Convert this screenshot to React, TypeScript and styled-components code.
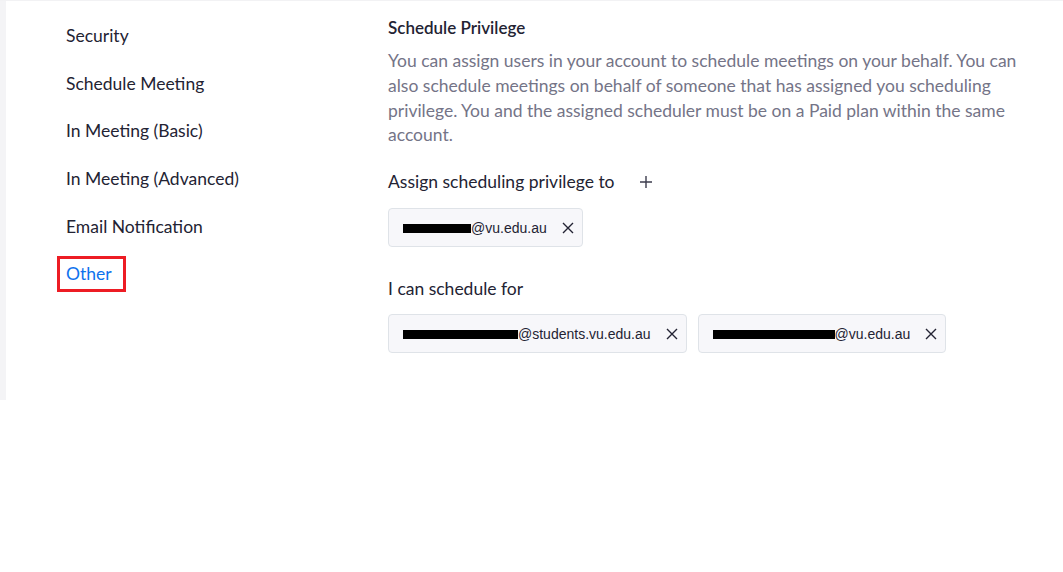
import React from "react";
import styled, { createGlobalStyle } from "styled-components";

const GlobalStyle = createGlobalStyle`
  body {
    margin: 0;
    font-family: Lato, "Open Sans", sans-serif;
    background: #ffffff;
    color: #232333;
  }
`;

const Page = styled.div`
  display: flex;
  height: 400px;
  border-top: 1px solid #f2f2f4;
  box-sizing: border-box;
`;

const Strip = styled.div`
  width: 6px;
  background: #f4f4f6;
`;

const Sidebar = styled.nav`
  width: 382px;
  padding: 11px 0 0 60px;
  box-sizing: border-box;
  display: flex;
  flex-direction: column;
  align-items: flex-start;
`;

const NavItem = styled.div<{ $active?: boolean }>`
  height: 47.6px;
  display: flex;
  align-items: center;
  font-size: 17.5px;
  color: ${(p) => (p.$active ? "#0e72ed" : "#232333")};
`;

const Highlight = styled.span`
  border: 3px solid #ed1c24;
  padding: 3px 11px 3px 6px;
  margin-left: -9px;
  line-height: 24px;
`;

const Content = styled.section`
  flex: 1;
  padding-top: 15px;
`;

const Title = styled.h3`
  margin: 0;
  font-size: 17px;
  font-weight: 600;
  line-height: 24px;
  color: #232333;
`;

const Description = styled.p`
  margin: 9px 0 0;
  max-width: 645px;
  font-size: 17.5px;
  line-height: 24.8px;
  color: #747487;
`;

const Label = styled.div<{ $gap: number }>`
  display: flex;
  align-items: center;
  margin-top: ${(p) => p.$gap}px;
  font-size: 17.5px;
  line-height: 24px;
  color: #232333;
`;

const AddButton = styled.span`
  display: inline-flex;
  margin-left: 25px;
  color: #3d3d4e;
`;

const ChipRow = styled.div<{ $gap: number }>`
  display: flex;
  gap: 11px;
  margin-top: ${(p) => p.$gap}px;
`;

const Chip = styled.div`
  display: flex;
  align-items: center;
  height: 39px;
  box-sizing: border-box;
  padding: 0 8px 0 14px;
  border: 1px solid #dfe3e8;
  border-radius: 4px;
  background: #f7f7fa;
  font-family: "Liberation Sans", Arial, sans-serif;
  font-size: 14px;
  color: #232333;
`;

const Redacted = styled.span<{ $w: number }>`
  display: inline-block;
  width: ${(p) => p.$w}px;
  height: 9px;
  background: #000;
  margin-top: 1px;
`;

const Close = styled.span`
  display: inline-flex;
  margin-left: 15px;
  color: #232333;
`;

const CloseIcon = () => (
  <svg width="12" height="12" viewBox="0 0 12 12" fill="none" stroke="currentColor" strokeWidth="1.4">
    <path d="M1 1l10 10M11 1L1 11" />
  </svg>
);

const PlusIcon = () => (
  <svg width="12" height="12" viewBox="0 0 12 12" fill="none" stroke="currentColor" strokeWidth="1.4">
    <path d="M6 0v12M0 6h12" />
  </svg>
);

const navItems = [
  "Security",
  "Schedule Meeting",
  "In Meeting (Basic)",
  "In Meeting (Advanced)",
  "Email Notification",
];

const EmailChip: React.FC<{ hidden: number; domain: string }> = ({ hidden, domain }) => (
  <Chip>
    <Redacted $w={hidden} />
    <span>{domain}</span>
    <Close>
      <CloseIcon />
    </Close>
  </Chip>
);

const App: React.FC = () => {
  return (
    <>
      <GlobalStyle />
      <Page>
        <Strip />
        <Sidebar>
          {navItems.map((item) => (
            <NavItem key={item}>{item}</NavItem>
          ))}
          <NavItem $active>
            <Highlight>Other</Highlight>
          </NavItem>
        </Sidebar>
        <Content>
          <Title>Schedule Privilege</Title>
          <Description>
            You can assign users in your account to schedule meetings on your behalf. You can also
            schedule meetings on behalf of someone that has assigned you scheduling privilege. You
            and the assigned scheduler must be on a Paid plan within the same account.
          </Description>
          <Label $gap={22}>
            Assign scheduling privilege to
            <AddButton>
              <PlusIcon />
            </AddButton>
          </Label>
          <ChipRow $gap={14}>
            <EmailChip hidden={68} domain="@vu.edu.au" />
          </ChipRow>
          <Label $gap={30}>I can schedule for</Label>
          <ChipRow $gap={13}>
            <EmailChip hidden={115} domain="@students.vu.edu.au" />
            <EmailChip hidden={122} domain="@vu.edu.au" />
          </ChipRow>
        </Content>
      </Page>
    </>
  );
};

export default App;
